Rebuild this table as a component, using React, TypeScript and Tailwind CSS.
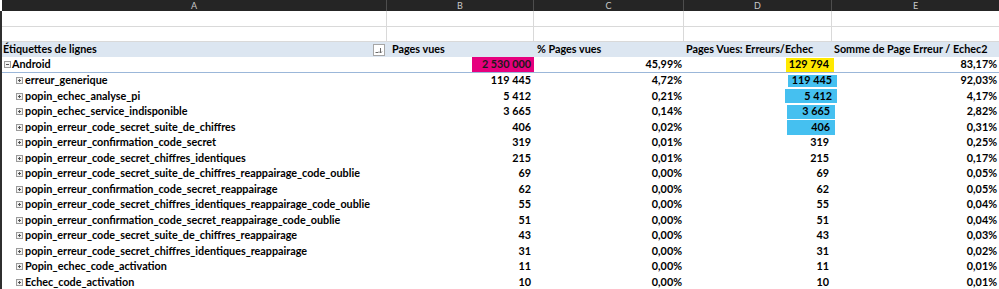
const cols = "grid grid-cols-[385px_147px_150px_148px_167px]"

type Row = {
    label: string
    views: string
    pct: string
    errors: string
    share: string
    bar?: { w: string; h: string; mr: string }
}

const rows: Row[] = [
    { label: "erreur_generique", views: "119 445", pct: "4,72%", errors: "119 445", share: "92,03%", bar: { w: "w-[49px]", h: "h-[12px]", mr: "mr-[-5px]" } },
    { label: "popin_echec_analyse_pi", views: "5 412", pct: "0,21%", errors: "5 412", share: "4,17%", bar: { w: "w-[52px]", h: "h-[14px]", mr: "mr-[-5px]" } },
    { label: "popin_echec_service_indisponible", views: "3 665", pct: "0,14%", errors: "3 665", share: "2,82%", bar: { w: "w-[48px]", h: "h-[14px]", mr: "mr-[-3px]" } },
    { label: "popin_erreur_code_secret_suite_de_chiffres", views: "406", pct: "0,02%", errors: "406", share: "0,31%", bar: { w: "w-[48px]", h: "h-[15px]", mr: "mr-[-3px]" } },
    { label: "popin_erreur_confirmation_code_secret", views: "319", pct: "0,01%", errors: "319", share: "0,25%" },
    { label: "popin_erreur_code_secret_chiffres_identiques", views: "215", pct: "0,01%", errors: "215", share: "0,17%" },
    { label: "popin_erreur_code_secret_suite_de_chiffres_reappairage_code_oublie", views: "69", pct: "0,00%", errors: "69", share: "0,05%" },
    { label: "popin_erreur_confirmation_code_secret_reappairage", views: "62", pct: "0,00%", errors: "62", share: "0,05%" },
    { label: "popin_erreur_code_secret_chiffres_identiques_reappairage_code_oublie", views: "55", pct: "0,00%", errors: "55", share: "0,04%" },
    { label: "popin_erreur_confirmation_code_secret_reappairage_code_oublie", views: "51", pct: "0,00%", errors: "51", share: "0,04%" },
    { label: "popin_erreur_code_secret_suite_de_chiffres_reappairage", views: "43", pct: "0,00%", errors: "43", share: "0,03%" },
    { label: "popin_erreur_code_secret_chiffres_identiques_reappairage", views: "31", pct: "0,00%", errors: "31", share: "0,02%" },
    { label: "Popin_echec_code_activation", views: "11", pct: "0,00%", errors: "11", share: "0,01%" },
    { label: "Echec_code_activation", views: "10", pct: "0,00%", errors: "10", share: "0,01%" },
]

function ToggleBox({ open }: { open?: boolean }) {
    return (
        <svg width="7" height="7" viewBox="0 0 7 7" className="shrink-0">
            <rect x="0.5" y="0.5" width="6" height="6" fill="#f2f2f2" stroke="#9a9a9a" />
            <path d="M2 3.5h3" stroke="#555" />
            {!open && <path d="M3.5 2v3" stroke="#555" />}
        </svg>
    )
}

function BlankRow({ h }: { h: string }) {
    return (
        <div className={`${cols} ${h} border-b border-[#d9d9d9]`}>
            <div className="border-r border-[#d9d9d9]" />
            <div className="border-r border-[#d9d9d9]" />
            <div className="border-r border-[#d9d9d9]" />
            <div className="border-r border-[#d9d9d9]" />
            <div />
        </div>
    )
}

export default function App() {
    return (
        <div className="w-[999px] h-[289px] overflow-hidden bg-white text-black font-bold text-[10.8px] leading-none" style={{ fontFamily: "Lato, 'Liberation Sans', sans-serif" }}>
            {/* column letters */}
            <div className={`${cols} h-[11px] bg-[#252525] text-[#c9c9c9] font-normal text-[9px] ml-[2px]`}>
                {["A", "B", "C", "D", "E"].map((c, i) => (
                    <div key={c} className={`flex items-center justify-center ${i < 4 ? "border-r border-[#4d4d4d]" : ""} ${i === 0 ? "-ml-[2px] pl-[2px]" : ""}`}>{c}</div>
                ))}
            </div>

            <div className="border-l-2 border-[#2f2f2f]">
                <BlankRow h="h-[16px]" />
                <BlankRow h="h-[15px]" />

                {/* pivot header */}
                <div className={`${cols} h-[15px] bg-[#dce6f1] items-center`}>
                    <div className="flex items-center justify-between pl-[1px] pr-[2px]">
                        <span>Étiquettes de lignes</span>
                        <span className="w-[12px] h-[12px] bg-white border border-[#a6a6a6] flex items-end justify-center pb-[1px]">
                            <svg width="8" height="6" viewBox="0 0 8 6">
                                <path d="M0.5 4.5h3" stroke="#6b6b6b" />
                                <path d="M5.5 0v5M4 3.5l1.5 1.5 1.5-1.5" stroke="#6b6b6b" fill="none" />
                            </svg>
                        </span>
                    </div>
                    <div className="pl-[5px]">Pages vues</div>
                    <div className="pl-[3px]">% Pages vues</div>
                    <div className="pl-[2px]">Pages Vues: Erreurs/Echec</div>
                    <div className="pl-[2px] whitespace-nowrap">Somme de Page Erreur / Echec2</div>
                </div>

                {/* Android total */}
                <div className={`${cols} h-[16px] border-b border-[#9bb7d9] items-center`}>
                    <div className="flex items-center gap-[1px] pl-[2px]">
                        <ToggleBox open />
                        <span>Android</span>
                    </div>
                    <div className="flex justify-end h-full">
                        <span className="w-[62px] h-full bg-[#e6007e] flex items-center justify-end pr-[3px] text-[#1a1a1a]">2 530 000</span>
                    </div>
                    <div className="text-right pr-[2px]">45,99%</div>
                    <div className="flex justify-end items-center h-full">
                        <span className="w-[48px] h-[14px] mr-[-2px] bg-[#ffe900] flex items-center justify-end pr-[5px]">129 794</span>
                    </div>
                    <div className="text-right pr-[2px]">83,17%</div>
                </div>

                {rows.map((r) => (
                    <div key={r.label} className={`${cols} h-[15.5px] items-center`}>
                        <div className="flex items-center gap-[2px] pl-[14px] whitespace-nowrap">
                            <ToggleBox />
                            <span>{r.label}</span>
                        </div>
                        <div className="text-right pr-[3px]">{r.views}</div>
                        <div className="text-right pr-[2px]">{r.pct}</div>
                        {r.bar ? (
                            <div className="flex justify-end items-center h-full">
                                <span className={`${r.bar.w} ${r.bar.h} ${r.bar.mr} bg-[#45c0f0] flex items-center justify-end pr-[5px]`}>{r.errors}</span>
                            </div>
                        ) : (
                            <div className="text-right pr-[3px]">{r.errors}</div>
                        )}
                        <div className="text-right pr-[2px]">{r.share}</div>
                    </div>
                ))}
            </div>
        </div>
    )
}
